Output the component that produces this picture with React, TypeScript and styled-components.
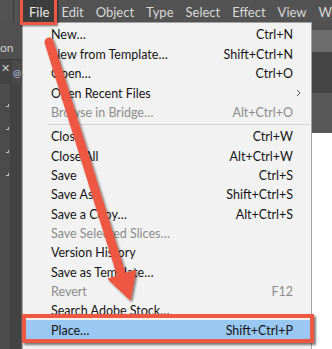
import React from "react";
import styled, { createGlobalStyle } from "styled-components";

const Global = createGlobalStyle`
  html, body { margin: 0; padding: 0; background: #535353; }
  * { box-sizing: border-box; }
`;

const Frame = styled.div`
  position: relative;
  width: 332px;
  height: 349px;
  overflow: hidden;
  background: #535353;
  font-family: Lato, "Open Sans", "Liberation Sans", sans-serif;
  font-size: 12.5px;
`;

const MenuBar = styled.div`
  height: 22px;
  display: flex;
  align-items: stretch;
  background: #535353;
  color: #d8d8d8;
  overflow: hidden;
`;

const BarLogo = styled.div`
  flex: none;
  width: 14px;
  border-right: 1px solid #3b3b3b;
  margin-right: 8px;
`;

const BarItem = styled.div<{ $active?: boolean }>`
  flex: none;
  display: flex;
  align-items: center;
  padding: 2px 6px 0 ${(p) => (p.$active ? 7 : 6)}px;
  white-space: nowrap;
  font-size: 13px;
  background: ${(p) => (p.$active ? "#3d3d3d" : "transparent")};
  color: ${(p) => (p.$active ? "#ececec" : "#d8d8d8")};
`;

const Workspace = styled.div`
  display: flex;
  height: 327px;
`;

const LeftDock = styled.div`
  width: 22px;
  flex: none;
  display: flex;
  flex-direction: column;
  background: #4f4f4f;
`;

const DockTop = styled.div`
  height: 38px;
  padding-top: 19px;
  color: #cfcfcf;
  font-size: 12px;
  line-height: 14px;
  background: #505050;
  border-bottom: 1px solid #3c3c3c;
`;

const DockTab = styled.div`
  height: 24px;
  display: flex;
  background: #434343;
`;

const TabClose = styled.div`
  width: 12px;
  color: #cfcfcf;
  font-size: 11px;
  line-height: 16px;
  padding-left: 1px;
`;

const TabDoc = styled.div`
  flex: 1;
  background: #4a4a4a;
  color: #b8c8e0;
  font-size: 10px;
  line-height: 10px;
  padding-top: 8px;
  padding-left: 1px;
`;

const Tools = styled.div`
  flex: 1;
  display: flex;
`;

const ToolCol = styled.div`
  width: 10px;
  background: #4b4b4b;
  display: flex;
  flex-direction: column;
  align-items: flex-end;
  padding-top: 20px;
  gap: 20px;
`;

const ToolMark = styled.div`
  width: 3px;
  height: 3px;
  border-right: 1px solid #bdbdbd;
  border-bottom: 1px solid #bdbdbd;
  margin-right: 1px;
`;

const CanvasCol = styled.div`
  flex: 1;
  background: #434343;
  border-right: 1px solid #5c5c5c;
`;

const Dropdown = styled.div`
  width: 290px;
  flex: none;
  background: #f2f2f2;
  border: 1px solid #a3a3a3;
  border-bottom: none;
  padding-top: 2.3px;
  display: flex;
  flex-direction: column;
  color: #111;
`;

const Row = styled.div<{ $disabled?: boolean; $hot?: boolean }>`
  height: 19.35px;
  flex: none;
  display: grid;
  grid-template-columns: 28px 1fr auto 18px;
  align-items: center;
  white-space: nowrap;
  color: ${(p) => (p.$disabled ? "#8c8c8c" : "#141414")};
  background: ${(p) => (p.$hot ? "#99c8f2" : "transparent")};
`;

const Label = styled.span`
  grid-column: 2;
`;

const Shortcut = styled.span`
  grid-column: 3;
  text-align: right;
`;

const Sub = styled.span`
  grid-column: 4;
  display: flex;
  padding-left: 3px;
`;

const Separator = styled.div`
  flex: none;
  height: 5px;
  margin: 0 2px 0 25px;
  display: flex;
  align-items: center;
  &::after {
    content: "";
    flex: 1;
    height: 1px;
    background: #d3d3d3;
  }
`;

const RightDock = styled.div`
  flex: 1;
  display: flex;
  flex-direction: column;
`;

const Stripe = styled.div<{ $h: number; $c: string }>`
  height: ${(p) => p.$h}px;
  background: ${(p) => p.$c};
  flex: ${(p) => (p.$h === 0 ? 1 : "none")};
`;

const FileBox = styled.div`
  position: absolute;
  left: 20px;
  top: -3px;
  width: 37px;
  height: 28px;
  border: 3px solid #ee5843;
  box-shadow: 1px 1px 2px rgba(0, 0, 0, 0.55);
`;

const PlaceBox = styled.div`
  position: absolute;
  left: 22px;
  top: 314px;
  width: 292px;
  height: 29px;
  border: 4px solid #ee5843;
  box-shadow: 2px 2px 2px rgba(0, 0, 0, 0.5);
`;

const Overlay = styled.svg`
  position: absolute;
  left: 0;
  top: 0;
  pointer-events: none;
`;

type Item = {
  label: string;
  key?: string;
  disabled?: boolean;
  sub?: boolean;
  hot?: boolean;
};

const group1: Item[] = [
  { label: "New…", key: "Ctrl+N" },
  { label: "New from Template…", key: "Shift+Ctrl+N" },
  { label: "Open…", key: "Ctrl+O" },
  { label: "Open Recent Files", sub: true },
  { label: "Browse in Bridge…", key: "Alt+Ctrl+O", disabled: true },
];

const group2: Item[] = [
  { label: "Close", key: "Ctrl+W" },
  { label: "Close All", key: "Alt+Ctrl+W" },
  { label: "Save", key: "Ctrl+S" },
  { label: "Save As…", key: "Shift+Ctrl+S" },
  { label: "Save a Copy…", key: "Alt+Ctrl+S" },
  { label: "Save Selected Slices…", disabled: true },
  { label: "Version History" },
  { label: "Save as Template…" },
  { label: "Revert", key: "F12", disabled: true },
  { label: "Search Adobe Stock…" },
  { label: "Place…", key: "Shift+Ctrl+P", hot: true },
];

const MenuRow = ({ item }: { item: Item }) => (
  <Row $disabled={item.disabled} $hot={item.hot}>
    <Label>{item.label}</Label>
    {item.key && <Shortcut>{item.key}</Shortcut>}
    {item.sub && (
      <Sub>
        <svg width="5" height="8" viewBox="0 0 5 8">
          <path d="M1 1 L4 4 L1 7" fill="none" stroke="#555" strokeWidth="1" />
        </svg>
      </Sub>
    )}
  </Row>
);

const bar = ["File", "Edit", "Object", "Type", "Select", "Effect", "View", "Wi"];

export default function App() {
  return (
    <Frame>
      <Global />
      <MenuBar>
        <BarLogo />
        {bar.map((b) => (
          <BarItem key={b} $active={b === "File"}>
            {b}
          </BarItem>
        ))}
      </MenuBar>
      <Workspace>
        <LeftDock>
          <DockTop>on</DockTop>
          <DockTab>
            <TabClose>✕</TabClose>
            <TabDoc>@</TabDoc>
          </DockTab>
          <Tools>
            <ToolCol>
              <ToolMark />
              <ToolMark />
              <ToolMark />
              <ToolMark />
            </ToolCol>
            <CanvasCol />
          </Tools>
        </LeftDock>
        <Dropdown>
          {group1.map((it) => (
            <MenuRow key={it.label} item={it} />
          ))}
          <Separator />
          {group2.map((it) => (
            <MenuRow key={it.label} item={it} />
          ))}
        </Dropdown>
        <RightDock>
          <Stripe $h={8} $c="#505050" />
          <Stripe $h={22} $c="#6c6c6c" />
          <Stripe $h={41} $c="#444444" />
          <Stripe $h={40} $c="#585858" />
          <Stripe $h={0} $c="#ffffff" />
        </RightDock>
      </Workspace>
      <FileBox />
      <PlaceBox />
      <Overlay width="332" height="349" viewBox="0 0 332 349">
        <defs>
          <filter id="sh" x="-20%" y="-20%" width="140%" height="140%">
            <feDropShadow dx="1.5" dy="1.5" stdDeviation="1.2" floodColor="#000" floodOpacity="0.55" />
          </filter>
        </defs>
        <g filter="url(#sh)" fill="#ee5843" stroke="#ee5843">
          <line x1="49" y1="42" x2="123" y2="280" strokeWidth="9" strokeLinecap="round" />
          <polygon points="130,299 109,279 135,271" strokeWidth="2" strokeLinejoin="round" />
        </g>
      </Overlay>
    </Frame>
  );
}
